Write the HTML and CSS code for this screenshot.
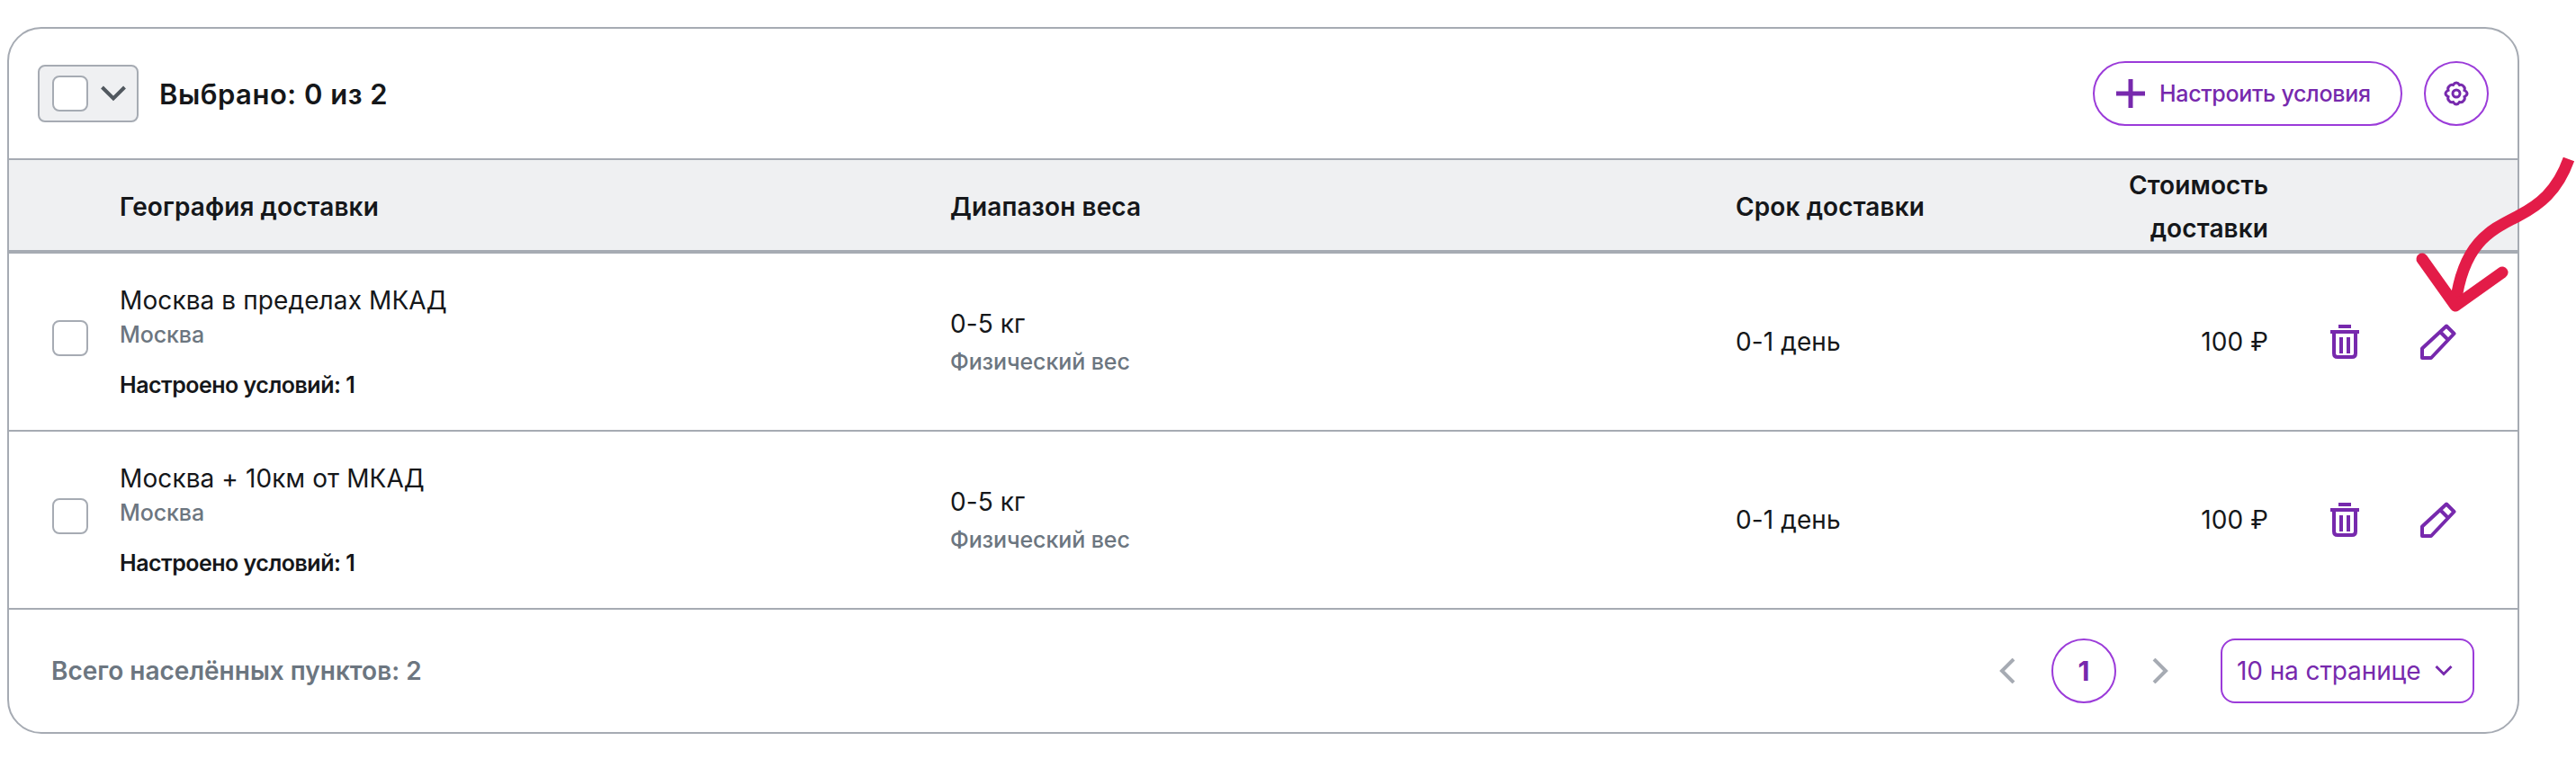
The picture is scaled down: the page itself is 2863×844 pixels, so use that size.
FILE: index.html
```html
<!DOCTYPE html>
<html lang="ru">
<head>
  <meta charset="UTF-8">
  <meta name="viewport" content="width=device-width, initial-scale=1.0">
  <title>Условия доставки</title>
  <link rel="stylesheet" href="styles.css">
</head>
<body>
  <!-- иконки -->
  <svg class="sprite" width="0" height="0">
    <symbol id="trash" viewBox="0 0 32 38">
      <path d="M9 2h14M0 8h32M4 8v24q0 4 4 4h16q4 0 4-4V8M12 14v18M20 14v18" fill="none" stroke="currentColor" stroke-width="4"/>
    </symbol>
    <symbol id="pencil" viewBox="0 0 40 40">
      <path d="M2 27.500 29 2.500 37.500 11 12 38H2zM22 9l9 9" fill="none" stroke="currentColor" stroke-width="4" stroke-linejoin="round"/>
    </symbol>
  </svg>

  <div class="card">
    <div class="toolbar">
      <button class="select-all">
        <span class="checkbox"></span>
        <svg width="28" height="18" viewBox="0 0 28 18"><path d="M1.500 2 14 14.500 26.500 2" fill="none" stroke="currentColor" stroke-width="4"/></svg>
      </button>
      <span class="selected">Выбрано: 0 из 2</span>
      <button class="btn-add">
        <svg width="32" height="32" viewBox="0 0 32 32"><path d="M0 16h32M16 0v32" stroke="currentColor" stroke-width="5"/></svg>
        Настроить условия
      </button>
      <button class="btn-settings">
        <svg width="28" height="28" viewBox="0 0 28 28" fill="none" stroke="currentColor" stroke-width="3">
          <path d="M14 2Q16 2 17.500 4.500Q20.500 3.500 22 6Q24 7.500 23 10.500Q26 12 26 14Q26 16 23 17.500Q24 20.500 22 22Q20.500 24.500 17.500 23.500Q16 26 14 26Q12 26 10.500 23.500Q7.500 24.500 6 22Q4 20.500 5 17.500Q2 16 2 14Q2 12 5 10.500Q4 7.500 6 6Q7.500 3.500 10.500 4.500Q12 2 14 2Z"/>
          <circle cx="14" cy="14" r="4"/>
        </svg>
      </button>
    </div>

    <div class="row head">
      <span></span>
      <span>География доставки</span>
      <span>Диапазон веса</span>
      <span>Срок доставки</span>
      <span class="cost">Стоимость доставки</span>
      <span></span>
    </div>

    <div class="row">
      <span class="checkbox"></span>
      <div>
        <div class="main">Москва в пределах МКАД</div>
        <div class="sub">Москва</div>
        <div class="conditions">Настроено условий: 1</div>
      </div>
      <div>
        <div class="main weight">0-5 кг</div>
        <div class="sub">Физический вес</div>
      </div>
      <div class="main">0-1 день</div>
      <div class="main cost">100 ₽</div>
      <div class="actions">
        <svg width="32" height="38"><use href="#trash"/></svg>
        <svg width="40" height="40"><use href="#pencil"/></svg>
      </div>
    </div>

    <div class="row">
      <span class="checkbox"></span>
      <div>
        <div class="main">Москва + 10км от МКАД</div>
        <div class="sub">Москва</div>
        <div class="conditions">Настроено условий: 1</div>
      </div>
      <div>
        <div class="main weight">0-5 кг</div>
        <div class="sub">Физический вес</div>
      </div>
      <div class="main">0-1 день</div>
      <div class="main cost">100 ₽</div>
      <div class="actions">
        <svg width="32" height="38"><use href="#trash"/></svg>
        <svg width="40" height="40"><use href="#pencil"/></svg>
      </div>
    </div>

    <div class="footer">
      <span class="total">Всего населённых пунктов: 2</span>
      <svg class="arrow" width="18" height="28" viewBox="0 0 18 28"><path d="M16 1 3 14l13 13" fill="none" stroke="currentColor" stroke-width="4"/></svg>
      <span class="page">1</span>
      <svg class="arrow" width="18" height="28" viewBox="0 0 18 28"><path d="M2 1l13 13L2 27" fill="none" stroke="currentColor" stroke-width="4"/></svg>
      <button class="page-size">
        10 на странице
        <svg width="20" height="14" viewBox="0 0 20 14"><path d="M1.500 2 10 10.500 18.500 2" fill="none" stroke="currentColor" stroke-width="3"/></svg>
      </button>
    </div>
  </div>

  <!-- стрелка-указатель на кнопку редактирования -->
  <svg class="pointer" width="190" height="190" viewBox="2673 160 190 190" fill="none" stroke="#e31c48" stroke-width="13">
    <path d="M2855 177C2842 213 2822 228 2799 240C2770 255 2738 268 2729 338"/>
    <path d="M2692 288l37 52 52-37" stroke-linecap="round" stroke-linejoin="round"/>
  </svg>
</body>
</html>
```
FILE: styles.css
```css
* {
  box-sizing: border-box;
}
body {
  margin: 0;
  padding: 30px 0 0 8px;
  background: #fff;
  color: #15171a;
  font-family: Inter, 'Open Sans', sans-serif;
  font-size: 28px;
  overflow: hidden;
}
button {
  font: inherit;
  padding: 0;
}
svg {
  display: block;
  flex-shrink: 0;
}
.sprite {
  position: absolute;
}
.card {
  width: 2792px;
  height: 786px;
  border: 2px solid #a6abb3;
  border-radius: 38px;
  overflow: hidden;
}
.toolbar {
  height: 146px;
  padding: 0 32px;
  border-bottom: 2px solid #a6abb3;
  display: flex;
  align-items: center;
}
.checkbox {
  width: 40px;
  height: 40px;
  background: #fff;
  border: 2px solid #a6abb3;
  border-radius: 8px;
}
.select-all {
  width: 112px;
  height: 64px;
  padding: 0 12px 0 14px;
  background: #eff0f2;
  border: 2px solid #a6abb3;
  border-radius: 8px;
  color: #51585f;
  display: flex;
  align-items: center;
  justify-content: space-between;
}
.selected {
  flex: 1;
  margin-left: 23px;
  font-size: 31px;
  font-weight: 600;
  letter-spacing: 0.5px;
}
.btn-add,
.btn-settings {
  height: 72px;
  background: #fff;
  border: 2px solid #9b3bd9;
  border-radius: 36px;
  color: #7729ad;
  display: flex;
  align-items: center;
}
.btn-add {
  width: 344px;
  margin-right: 24px;
  padding-left: 24px;
  gap: 16px;
  font-size: 25px;
  font-weight: 500;
  letter-spacing: -0.3px;
}
.btn-settings {
  width: 72px;
  justify-content: center;
}
.row {
  height: 198px;
  border-bottom: 2px solid #a6abb3;
  display: grid;
  grid-template-columns: 123px 923px 873px 401px 191px 1fr;
  align-items: center;
}
.row > .checkbox {
  margin: -8px 0 0 48px;
}
.head {
  height: 104px;
  padding-top: 3px;
  background: #eff0f2;
  border-bottom-width: 4px;
  line-height: 48px;
  font-weight: 600;
  letter-spacing: 0.1px;
}
.cost {
  text-align: right;
}
.main {
  line-height: 40px;
  letter-spacing: 0.1px;
}
.sub {
  color: #6c7680;
  font-size: 25px;
  font-weight: 500;
  line-height: 36px;
  letter-spacing: -0.1px;
}
.weight {
  margin-bottom: 4px;
}
.conditions {
  margin-top: 20px;
  font-size: 25px;
  font-weight: 600;
  line-height: 36px;
  letter-spacing: -0.5px;
}
.actions {
  padding-left: 69px;
  display: flex;
  align-items: center;
  gap: 68px;
  color: #7729ad;
}
.footer {
  height: 136px;
  padding: 0 48px;
  display: flex;
  align-items: center;
}
.total {
  flex: 1;
  margin-left: -1px;
  color: #6c7680;
  font-weight: 600;
}
.arrow {
  color: #a6abb3;
}
.page {
  width: 72px;
  height: 72px;
  margin: 0 40px;
  border: 2px solid #9b3bd9;
  border-radius: 50%;
  color: #7729ad;
  font-size: 30px;
  font-weight: 700;
  display: flex;
  align-items: center;
  justify-content: center;
}
.page-size {
  width: 282px;
  height: 72px;
  margin-left: 58px;
  padding: 0 22px 0 16px;
  background: #fff;
  border: 2px solid #9b3bd9;
  border-radius: 16px;
  color: #7729ad;
  letter-spacing: -0.1px;
  display: flex;
  align-items: center;
  justify-content: space-between;
}
.pointer {
  position: absolute;
  left: 2673px;
  top: 160px;
}
```
